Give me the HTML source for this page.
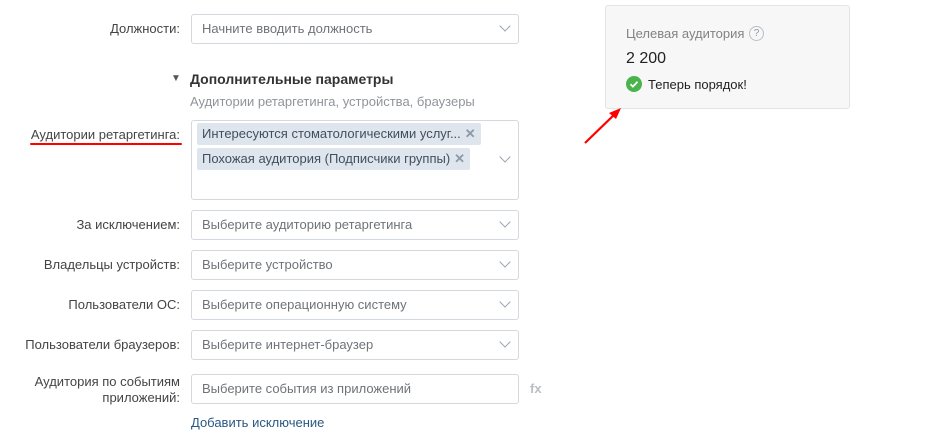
<!DOCTYPE html>
<html><head><meta charset="utf-8"><style>
body{margin:0;width:949px;height:446px;background:#fff;font-family:"Liberation Sans",sans-serif;font-size:13px;color:#222;position:relative;overflow:hidden}
.a{position:absolute}
.lbl{position:absolute;right:769px;text-align:right;color:#444;line-height:16px}
.inp{position:absolute;left:191px;width:326px;height:28px;border:1px solid #d3d9de;border-radius:3px;color:#6f7378;line-height:28px;text-indent:10px}
.chev{position:absolute;right:9px;top:7px;width:7px;height:7px;border-right:1.3px solid #9aa3ad;border-bottom:1.3px solid #9aa3ad;transform:rotate(45deg)}
.tag{position:absolute;left:5px;height:22px;background:#dee5ec;border-radius:2px;line-height:22px;color:#404f60;padding:0 5px;text-indent:0}
.x{color:#8a9aab;font-weight:bold;margin-left:4px}
</style></head><body>
<div class="lbl" style="top:21px">Должности:</div>
<div class="inp" style="top:14px">Начните вводить должность<div class="chev"></div></div>

<div class="a" style="left:171px;top:73px;font-size:10px;color:#555">▼</div>
<div class="a" style="left:190px;top:71px;font-weight:bold;font-size:14px;color:#333">Дополнительные параметры</div>
<div class="a" style="left:190px;top:94px;color:#909499">Аудитории ретаргетинга, устройства, браузеры</div>

<div class="lbl" style="top:127px">Аудитории ретаргетинга:</div>
<div class="a" style="left:30px;top:143px;width:152px;height:2px;background:#f00;border-radius:1px"></div>
<div class="inp" style="top:120px;height:78px;color:#404f60">
<div class="tag" style="top:2px">Интересуются стоматологическими услуг...<span class="x">✕</span></div>
<div class="tag" style="top:27px">Похожая аудитория (Подписчики группы)<span class="x">✕</span></div>
<div class="chev" style="top:32px"></div></div>

<div class="lbl" style="top:217px">За исключением:</div>
<div class="inp" style="top:210px">Выберите аудиторию ретаргетинга<div class="chev"></div></div>
<div class="lbl" style="top:257px">Владельцы устройств:</div>
<div class="inp" style="top:250px">Выберите устройство<div class="chev"></div></div>
<div class="lbl" style="top:297px">Пользователи ОС:</div>
<div class="inp" style="top:290px">Выберите операционную систему<div class="chev"></div></div>
<div class="lbl" style="top:337px">Пользователи браузеров:</div>
<div class="inp" style="top:330px">Выберите интернет-браузер<div class="chev"></div></div>
<div class="lbl" style="top:374px">Аудитория по событиям<br>приложений:</div>
<div class="inp" style="top:374px;width:326px">Выберите события из приложений</div>
<div class="a" style="left:530px;top:381px;color:#b8bec4;font-weight:bold">fx</div>
<div class="a" style="left:191px;top:415px;color:#2a5885">Добавить исключение</div>

<div class="a" style="left:605px;top:5px;width:243px;height:102px;background:#f7f7f7;border:1px solid #e3e4e6;border-radius:3px">
<div class="a" style="left:20px;top:20px;color:#828282">Целевая аудитория</div>
<div class="a" style="left:143px;top:20px;width:13px;height:13px;border:1px solid #b6bfca;border-radius:50%;font-size:10px;line-height:13px;text-align:center;color:#8a96a4">?</div>
<div class="a" style="left:20px;top:44px;font-size:16px;color:#222">2 200</div>
<div class="a" style="left:20px;top:70px;width:16px;height:16px;border-radius:50%;background:#4bb34b"><svg width="16" height="16"><path d="M4.5 8.2l2.4 2.4 4.6-4.8" fill="none" stroke="#fff" stroke-width="1.8"/></svg></div>
<div class="a" style="left:42px;top:71px;color:#222">Теперь порядок!</div>
</div>
<svg class="a" style="left:580px;top:100px" width="50" height="50"><path d="M5 43L37 12" stroke="#f00" stroke-width="2.2"/><path d="M41 8L29 13L36 19Z" fill="#f00"/></svg>
</body></html>
